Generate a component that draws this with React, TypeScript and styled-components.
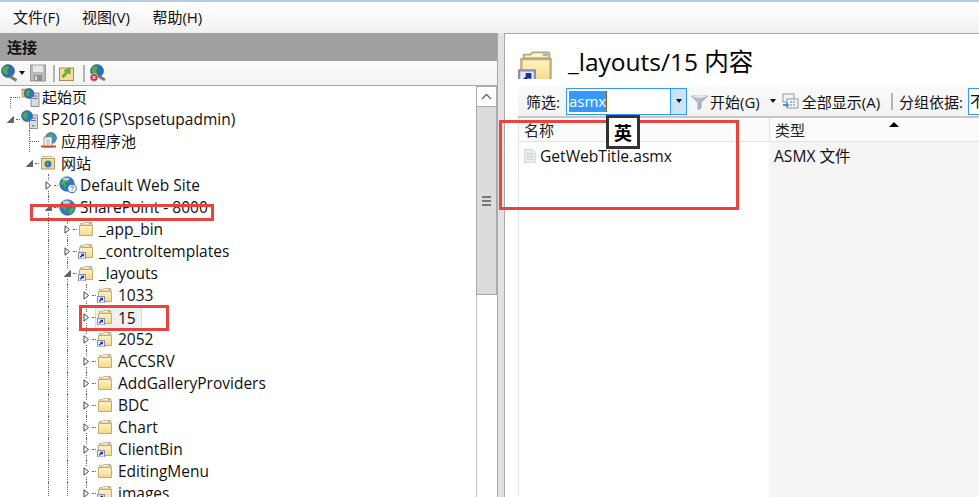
import React from "react";
import styled, { createGlobalStyle } from "styled-components";

const Global = createGlobalStyle`
  html, body { margin: 0; padding: 0; background: #fff; overflow: hidden; }
  body { font-family: "Open Sans", "Noto Sans CJK SC", sans-serif; color: #111; }
  * { box-sizing: border-box; }
  svg { flex: none; }
`;

const Page = styled.div`
  position: relative;
  width: 979px;
  height: 497px;
  overflow: hidden;
  display: flex;
  flex-direction: column;
  border-top: 2px solid #b4cde4;
`;
const MenuBar = styled.div`
  height: 31px;
  flex: none;
  display: flex;
  align-items: center;
  padding: 0 0 2px 13px;
  gap: 22.5px;
  font-size: 15px;
  background: linear-gradient(#ffffff, #f1f1f1);
`;
const Body = styled.div`
  flex: 1;
  min-height: 0;
  display: flex;
`;
const LeftPane = styled.div`
  width: 497px;
  flex: none;
  display: flex;
  flex-direction: column;
  min-height: 0;
`;
const PaneTitle = styled.div`
  height: 28px;
  flex: none;
  background: #a0a0a0;
  font-weight: 700;
  font-size: 15px;
  padding: 0 0 2px 7px;
  display: flex;
  align-items: center;
`;
const IconBar = styled.div`
  height: 25px;
  flex: none;
  display: flex;
  align-items: center;
  background: linear-gradient(#fbfbfb, #f3f3f3);
  border-bottom: 1px solid #a9a9a9;
  padding-left: 1px;
`;
const BarDivider = styled.span<{ $l: number; $r: number }>`
  width: 2px;
  height: 17px;
  background: #b5b5b5;
  margin: 0 ${(p) => p.$r}px 0 ${(p) => p.$l}px;
  flex: none;
`;
const TreeArea = styled.div`
  flex: 1;
  min-height: 0;
  display: flex;
`;
const Tree = styled.div`
  flex: 1;
  min-width: 0;
  overflow: hidden;
  padding: 0 0 0 1px;
  background: #fff;
  font-size: 15.5px;
`;
const Row = styled.div`
  height: 22px;
  display: flex;
  align-items: stretch;
  white-space: nowrap;
`;
const Slot = styled.span<{ $line?: boolean; $from?: number }>`
  position: relative;
  width: 19px;
  flex: none;
  ${(p) =>
    p.$line &&
    `&::before { content: ""; position: absolute; left: 9px; top: ${p.$from ?? 0}px; bottom: 0; border-left: 1px dotted #666; }`}
`;
const Branch = styled(Slot)<{ $kind: "first" | "mid" | "open" | "closed" }>`
  &::after {
    content: "";
    position: absolute;
    left: ${(p) => (p.$kind === "mid" || p.$kind === "first" ? 9 : 15)}px;
    right: 0;
    top: 11px;
    border-top: 1px dotted #666;
  }
  svg { position: absolute; left: 5px; top: 7px; z-index: 1; background: #fff; }
`;
const IconBox = styled.span`
  position: relative;
  z-index: 2;
  width: 16px;
  flex: none;
  margin: 0 0 0 1px;
  display: flex;
  align-items: center;
`;
const Label = styled.span<{ $selected?: boolean; $cjk?: boolean }>`
  display: flex;
  align-items: center;
  margin-left: 1px;
  padding: 0 4px;
  line-height: 20px;
  ${(p) => p.$cjk && `font-size: 15px;`}
  ${(p) =>
    p.$selected &&
    `background: #f0f0f0; outline: 1px solid #dcdcdc; margin-left: -17px; padding-left: 22px; padding-right: 5px; height: 21px; margin-top: 1px;`}
`;
const Scrollbar = styled.div`
  width: 21px;
  flex: none;
  display: flex;
  flex-direction: column;
  background: #fff;
  border-left: 1px solid #c4c4c4;
`;
const ScrollButton = styled.div`
  height: 21px;
  flex: none;
  margin-left: -1px;
  border: 1px solid #a9a9a9;
  background: #fff;
  display: flex;
  align-items: center;
  justify-content: center;
`;
const Thumb = styled.div`
  height: 188px;
  flex: none;
  margin-left: -1px;
  border: 1px solid #a9a9a9;
  border-top: none;
  background: #dcdcdc;
  display: flex;
  flex-direction: column;
  justify-content: center;
  align-items: center;
  gap: 2px;
`;
const Grip = styled.i`
  display: block;
  width: 9px;
  height: 2px;
  background: #777;
`;
const Splitter = styled.div`
  width: 8px;
  flex: none;
  background: #e2e2e2;
  border-left: 1px solid #a9a9a9;
  border-right: 1px solid #a9a9a9;
`;
const RightPane = styled.div`
  flex: 1;
  min-width: 0;
  display: flex;
  flex-direction: column;
  border-top: 1px solid #a9a9a9;
  background: #fff;
  padding-left: 13px;
`;
const Heading = styled.div`
  height: 52px;
  flex: none;
  display: flex;
  align-items: flex-end;
  gap: 14px;
  padding-bottom: 7px;
`;
const Title = styled.div`
  font-size: 24.5px;
  line-height: 30px;
  padding-bottom: 2px;
  white-space: nowrap;
  color: #000;
`;
const FilterBar = styled.div`
  height: 32px;
  flex: none;
  display: flex;
  align-items: center;
  padding-left: 8px;
  font-size: 15px;
  white-space: nowrap;
  background: linear-gradient(#fafafa, #f3f3f3);
  border-bottom: 2px solid #c6c6c6;
`;
const FilterLabel = styled.span`
  width: 40px;
  flex: none;
`;
const Combo = styled.div`
  width: 121px;
  height: 27px;
  flex: none;
  border: 1px solid #3399ff;
  background: #fff;
  display: flex;
  align-items: stretch;
`;
const ComboText = styled.div`
  flex: 1;
  padding: 2px 0 0 2px;
`;
const Selected = styled.span`
  display: inline-block;
  background: #3399ff;
  color: #fff;
  padding: 0;
  line-height: 20px;
  height: 21px;
  border-right: 1px solid #a05a10;
`;
const ComboButton = styled.div`
  width: 16px;
  flex: none;
  background: #cce4f7;
  border-left: 1px solid #3399ff;
  display: flex;
  align-items: center;
  justify-content: center;
`;
const Caret = styled.i<{ $l?: number; $r?: number }>`
  width: 0;
  height: 0;
  border: 3px solid transparent;
  border-top: 4px solid #111;
  border-bottom: none;
  display: block;
  flex: none;
  margin: 0 ${(p) => p.$r ?? 0}px 0 ${(p) => p.$l ?? 0}px;
`;
const BarText = styled.span<{ $l?: number }>`
  display: flex;
  align-items: center;
  margin-left: ${(p) => p.$l ?? 0}px;
  flex: none;
`;
const GroupBox = styled.div`
  width: 20px;
  height: 27px;
  flex: none;
  margin-left: 5px;
  border: 1px solid #3399ff;
  border-right: none;
  background: #fff;
  padding: 1px 0 0 1px;
  overflow: hidden;
`;
const Table = styled.div`
  flex: 1;
  min-height: 0;
  display: grid;
  grid-template-columns: 250px 1fr;
  grid-template-rows: 24px 1fr;
  border-left: 1px solid #e4e4e4;
  font-size: 15.6px;
`;
const HeadCell = styled.div<{ $divider?: boolean }>`
  position: relative;
  display: flex;
  align-items: center;
  font-size: 15px;
  padding-left: 5px;
  background: #fbfbfb;
  border-bottom: 1px solid #e2e2e2;
  ${(p) => p.$divider && `border-left: 1px solid #e2e2e2;`}
  color: #222;
`;
const SortArrow = styled.i`
  position: absolute;
  left: 119px;
  top: 4px;
  width: 0;
  height: 0;
  border: 5px solid transparent;
  border-bottom: 5px solid #000;
  border-top: none;
`;
const NameCell = styled.div`
  display: flex;
  align-items: flex-start;
  gap: 4px;
  padding: 4px 0 0 5px;
  line-height: 20px;
`;
const TypeCell = styled.div`
  background: #f5f5f5;
  padding: 4px 0 0 5px;
  line-height: 20px;
`;
const Mark = styled.div<{ $x: number; $y: number; $w: number; $h: number }>`
  position: absolute;
  left: ${(p) => p.$x}px;
  top: ${(p) => p.$y}px;
  width: ${(p) => p.$w}px;
  height: ${(p) => p.$h}px;
  border: 3px solid #e8443f;
  z-index: 5;
`;
const ImeBox = styled.div`
  position: absolute;
  left: 606px;
  top: 113px;
  width: 34px;
  height: 34px;
  border: 3px solid #333;
  background: #fff;
  font-size: 18px;
  font-weight: 700;
  color: #000;
  display: flex;
  align-items: center;
  justify-content: center;
  z-index: 6;
`;

const Folder = ({ link, big }: { link?: boolean; big?: boolean }) => (
  <svg width={big ? 36 : 16} height={big ? 30 : 16} viewBox={big ? "0 0 16 13.300" : "0 0 16 16"}>
    <defs>
      <linearGradient id="fg" x1="0" y1="0" x2="0" y2="1">
        <stop offset="0" stopColor="#fff3c2" />
        <stop offset="1" stopColor="#f6d987" />
      </linearGradient>
    </defs>
    <path d="M2.500 4V2.500h3l1-1h7l.5.6V4z" fill="#fff7d8" stroke="#b9a578" strokeWidth=".8" />
    <rect x="11" y="2" width="2.400" height="1.200" fill="#8fb4dc" />
    <path d="M1.500 4.500h13v10h-13z" fill="url(#fg)" stroke="#c4aa70" strokeWidth="1" />
    {link && (
      <>
        <rect x=".5" y="9.500" width="7" height="6.500" fill="#e9e9f4" stroke="#8a8cc0" strokeWidth="1" />
        <path d="M2.300 14.200 5 11.500M3.400 11.300h1.900v1.900" stroke="#1c2fa0" strokeWidth="1.300" fill="none" />
      </>
    )}
  </svg>
);
const Globe = () => (
  <svg width="17" height="17" viewBox="0 0 16 16">
    <circle cx="8" cy="8" r="7.300" fill="#2f78c4" stroke="#2b5a8a" strokeWidth=".6" />
    <path d="M4 4c2-1 4-1 5 0l-1 2-2 1 1 2-1 3-2-3-3-2zM10 9l4-1v2l-3 4-2-1z" fill="#4fae3c" />
    <ellipse cx="7" cy="3" rx="3.500" ry="1.500" fill="#c5e2f8" opacity=".85" />
  </svg>
);
const GlobeHelp = () => (
  <svg width="18" height="18" viewBox="0 0 18 18">
    <circle cx="8" cy="8" r="7.300" fill="#2f78c4" stroke="#2b5a8a" strokeWidth=".6" />
    <path d="M4 4c2-1 4-1 5 0l-1 2-2 1 1 2-1 3-2-3-3-2z" fill="#4fae3c" />
    <ellipse cx="7" cy="3" rx="3.500" ry="1.500" fill="#c5e2f8" opacity=".85" />
    <circle cx="13" cy="12.500" r="4.300" fill="#fff" stroke="#2c5fa8" />
    <path d="M11.700 11.500c.2-1.500 2.700-1.500 2.700 0 0 1-1.300 1-1.300 2M13.100 14.300v.9" stroke="#2c5fa8" fill="none" strokeWidth="1" />
  </svg>
);
const Server = () => (
  <svg width="18" height="19" viewBox="0 0 18 19">
    <rect x="8.500" y="5" width="8" height="13.500" fill="#d8dde2" stroke="#6f7a84" strokeWidth=".8" />
    <path d="M10 8h5M10 10.500h5" stroke="#5c6670" strokeWidth=".9" />
    <rect x="11" y="15" width="2.500" height="1.500" fill="#4aa84a" />
    <circle cx="6" cy="6" r="5.500" fill="#2f78c4" stroke="#2b5a8a" strokeWidth=".6" />
    <path d="M3 3c2-1 3.500 0 4 1l-1 2 .5 2-2 1.500L3 7 1 6z" fill="#4fae3c" />
  </svg>
);
const StartPage = () => (
  <svg width="19" height="19" viewBox="0 0 19 19">
    <path d="M1 1h5l1 1.500H1z" fill="#f0c040" stroke="#b08a2a" strokeWidth=".6" />
    <rect x="1" y="2" width="9" height="7" fill="#f6d576" stroke="#b08a2a" strokeWidth=".7" />
    <rect x="10" y="5" width="8" height="13.500" fill="#d8dde2" stroke="#6f7a84" strokeWidth=".8" />
    <path d="M11.500 8h5M11.500 10.500h5" stroke="#5c6670" strokeWidth=".9" />
    <circle cx="8" cy="5.500" r="5" fill="#2f78c4" stroke="#2b5a8a" strokeWidth=".6" />
    <path d="M6 3c2-1 3 0 3 1l-1 2 .5 2-2 .5-1-2-1-1z" fill="#4fae3c" />
  </svg>
);
const AppPool = () => (
  <svg width="18" height="18" viewBox="0 0 18 18">
    <circle cx="11" cy="6" r="5.500" fill="#4c8bc9" stroke="#2b5a8a" strokeWidth=".6" />
    <path d="M9 2.500c2-1 3 0 3 1l-1 2-2 0-1-1.500z" fill="#59ad45" />
    <path d="M4 5h8v10H4z" fill="#fff" stroke="#7d8792" strokeWidth=".9" />
    <path d="M6 8h4M6 10h4M6 12h4" stroke="#8d97a2" strokeWidth=".9" />
    <path d="M1 14.500h15" stroke="#c9492f" strokeWidth="2" />
  </svg>
);
const SiteFolder = () => (
  <svg width="16" height="16" viewBox="0 0 16 16">
    <path d="M3 3.500V1.500h9l1 1v1z" fill="#fff7d8" stroke="#b9a578" strokeWidth=".8" />
    <rect x="1.500" y="3.500" width="13" height="10.500" fill="#f6dc92" stroke="#b49a63" />
    <circle cx="8" cy="9" r="3.500" fill="#2f78c4" />
    <path d="M6.500 7.500c1-1 2-1 2.500 0l-1 1.500 .5 1.500-1.500.5-.7-2z" fill="#4fae3c" />
  </svg>
);
const Expander = ({ open }: { open: boolean }) => (
  <svg width="9" height="9" viewBox="0 0 9 9">
    {open ? (
      <path d="M7.500 1.500v6h-6z" fill="#666" stroke="#666" />
    ) : (
      <path d="M2 .8v7.400L6.500 4.500z" fill="#fff" stroke="#444" />
    )}
  </svg>
);
const Doc = () => (
  <svg width="12" height="20" viewBox="0 0 12 20">
    <path d="M.5 3.500h8l3 3v10h-11z" fill="#e8edf2" stroke="#d3dae1" />
    <path d="M2.500 8h7M2.500 10.500h7M2.500 13h7" stroke="#c4ccd4" />
  </svg>
);
const ToolGlobe = () => (
  <svg width="17" height="19" viewBox="0 0 17 19">
    <circle cx="7" cy="7" r="6.500" fill="#2a6fb8" stroke="#2b5a8a" strokeWidth=".6" />
    <path d="M3 3c2-1.500 4-1 5 0l-1 2-1 2 1 2-2 2-2-2-2-2z" fill="#4fae3c" />
    <path d="M9 12.500l6.500 4" stroke="#7c7c7c" strokeWidth="3" />
  </svg>
);
const Save = () => (
  <svg width="16" height="18" viewBox="0 0 16 18">
    <rect x=".5" y="1" width="15" height="16" fill="#b9b9b9" stroke="#9a9a9a" />
    <rect x="3" y="1.500" width="10" height="6.500" fill="#e8e8e8" />
    <rect x="4" y="11" width="8" height="6" fill="#8f8f8f" />
    <rect x="5" y="12" width="2" height="4" fill="#d8d8d8" />
  </svg>
);
const UpFolder = () => (
  <svg width="15" height="18" viewBox="0 0 15 18">
    <rect x=".5" y="4" width="14" height="12.500" fill="#f5dc98" stroke="#a98e55" />
    <path d="M3 12l4-4.500-2-1L11 4v6L9 8.800l-4.500 5z" fill="#6ab83a" stroke="#3c7f1f" strokeWidth=".5" />
  </svg>
);
const Disconnect = () => (
  <svg width="17" height="19" viewBox="0 0 17 19">
    <circle cx="8" cy="7" r="6.500" fill="#2a6fb8" stroke="#2b5a8a" strokeWidth=".6" />
    <path d="M4 3c2-1.500 4-1 5 0l-1 2-1 2 1 2-2 2-2-2-2-2z" fill="#4fae3c" />
    <path d="M10 12.500l6 3.500" stroke="#7c7c7c" strokeWidth="3" />
    <circle cx="5" cy="13.500" r="4" fill="#c8323c" stroke="#fff" strokeWidth=".6" />
    <path d="M3.500 12l3 3M6.500 12l-3 3" stroke="#fff" />
  </svg>
);
const FunnelIcon = () => (
  <svg width="17" height="17" viewBox="0 0 17 17">
    <path d="M.5 3h16L10 9.500V15l-3 1.500v-7z" fill="#aebcc8" stroke="#8496a5" strokeWidth=".8" />
    <ellipse cx="8.500" cy="3.500" rx="7" ry="1.200" fill="#e5ecf2" />
  </svg>
);
const ShowAll = () => (
  <svg width="17" height="17" viewBox="0 0 17 17">
    <rect x="1" y="1" width="11" height="8" fill="#f2f2f2" stroke="#8c9aa6" />
    <rect x="5" y="6" width="11" height="9" fill="#f4f6f8" stroke="#8c9aa6" />
    <path d="M8 9h2M11 9h2M8 12h2M11 12h2" stroke="#6d7b88" />
    <path d="M1 11h3V9l3.500 3L4 15v-2H1z" fill="#4a90d0" />
  </svg>
);

type Item = {
  text: string;
  level: number;
  guides: number[];
  kind: "first" | "mid" | "open" | "closed";
  icon: React.ReactNode;
  selected?: boolean;
  cjk?: boolean;
};

const F = <Folder />;
const L = <Folder link />;
const items: Item[] = [
  { text: "起始页", level: 0, guides: [], kind: "first", icon: <StartPage />, cjk: true },
  { text: "SP2016 (SP\\spsetupadmin)", level: 0, guides: [], kind: "open", icon: <Server /> },
  { text: "应用程序池", level: 1, guides: [], kind: "mid", icon: <AppPool />, cjk: true },
  { text: "网站", level: 1, guides: [], kind: "open", icon: <SiteFolder />, cjk: true },
  { text: "Default Web Site", level: 2, guides: [], kind: "closed", icon: <GlobeHelp /> },
  { text: "SharePoint - 8000", level: 2, guides: [], kind: "open", icon: <Globe /> },
  { text: "_app_bin", level: 3, guides: [2], kind: "closed", icon: F },
  { text: "_controltemplates", level: 3, guides: [2], kind: "closed", icon: L },
  { text: "_layouts", level: 3, guides: [2], kind: "open", icon: L },
  { text: "1033", level: 4, guides: [2, 3], kind: "closed", icon: L },
  { text: "15", level: 4, guides: [2, 3], kind: "closed", icon: L, selected: true },
  { text: "2052", level: 4, guides: [2, 3], kind: "closed", icon: L },
  { text: "ACCSRV", level: 4, guides: [2, 3], kind: "closed", icon: F },
  { text: "AddGalleryProviders", level: 4, guides: [2, 3], kind: "closed", icon: F },
  { text: "BDC", level: 4, guides: [2, 3], kind: "closed", icon: F },
  { text: "Chart", level: 4, guides: [2, 3], kind: "closed", icon: F },
  { text: "ClientBin", level: 4, guides: [2, 3], kind: "closed", icon: L },
  { text: "EditingMenu", level: 4, guides: [2, 3], kind: "closed", icon: F },
  { text: "images", level: 4, guides: [2, 3], kind: "closed", icon: L },
];

export default function App() {
  return (
    <Page>
      <Global />
      <MenuBar>
        <span>文件(F)</span>
        <span>视图(V)</span>
        <span>帮助(H)</span>
      </MenuBar>
      <Body>
        <LeftPane>
          <PaneTitle>连接</PaneTitle>
          <IconBar>
            <ToolGlobe />
            <Caret $l={1} $r={5} />
            <Save />
            <BarDivider $l={7} $r={4} />
            <UpFolder />
            <BarDivider $l={9} $r={4} />
            <Disconnect />
          </IconBar>
          <TreeArea>
            <Tree>
              {items.map((it) => (
                <Row key={it.text}>
                  {Array.from({ length: it.level }, (_, i) => (
                    <Slot key={i} $line={it.guides.includes(i)} />
                  ))}
                  <Branch
                    $kind={it.kind}
                    $from={it.kind === "first" ? 11 : 0}
                    $line={it.level >= 2 || it.kind === "mid" || it.kind === "first"}
                  >
                    {(it.kind === "open" || it.kind === "closed") && <Expander open={it.kind === "open"} />}
                  </Branch>
                  <IconBox>{it.icon}</IconBox>
                  <Label $selected={it.selected} $cjk={it.cjk}>
                    {it.text}
                  </Label>
                </Row>
              ))}
            </Tree>
            <Scrollbar>
              <ScrollButton>
                <svg width="11" height="7" viewBox="0 0 11 7">
                  <path d="M1 6l4.500-4.500L10 6" fill="none" stroke="#666" strokeWidth="1.300" />
                </svg>
              </ScrollButton>
              <Thumb>
                <Grip />
                <Grip />
                <Grip />
              </Thumb>
            </Scrollbar>
          </TreeArea>
        </LeftPane>
        <Splitter />
        <RightPane>
          <Heading>
            <Folder link big />
            <Title>_layouts/15 内容</Title>
          </Heading>
          <FilterBar>
            <FilterLabel>筛选:</FilterLabel>
            <Combo>
              <ComboText>
                <Selected>asmx</Selected>
              </ComboText>
              <ComboButton>
                <Caret />
              </ComboButton>
            </Combo>
            <BarText $l={4}>
              <FunnelIcon />
            </BarText>
            <BarText $l={2}>开始(G)</BarText>
            <Caret $l={10} $r={6} />
            <ShowAll />
            <BarText $l={3}>全部显示(A)</BarText>
            <BarDivider $l={11} $r={6} />
            <BarText>分组依据:</BarText>
            <GroupBox>不</GroupBox>
          </FilterBar>
          <Table>
            <HeadCell>名称</HeadCell>
            <HeadCell $divider>
              类型
              <SortArrow />
            </HeadCell>
            <NameCell>
              <Doc />
              GetWebTitle.asmx
            </NameCell>
            <TypeCell>ASMX 文件</TypeCell>
          </Table>
        </RightPane>
      </Body>
      <Mark $x={30} $y={202} $w={184} $h={17} />
      <Mark $x={79} $y={303} $w={90} $h={26} />
      <Mark $x={499} $y={118} $w={240} $h={90} />
      <ImeBox>英</ImeBox>
    </Page>
  );
}
